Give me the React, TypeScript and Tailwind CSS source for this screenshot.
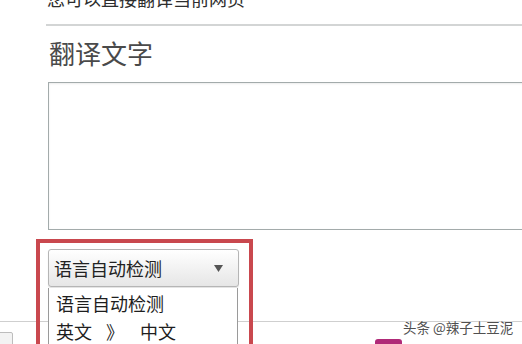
import React from "react";

const FONT = '"Noto Sans CJK SC", "Noto Sans", sans-serif';

export default function App() {
  return (
    <div
      className="relative w-[522px] h-[344px] overflow-hidden bg-white"
      style={{ fontFamily: FONT }}
    >
      {/* top cut-off hint text */}
      <div className="ml-[47px] mt-[-12px] text-[18px] leading-[20px] text-[#2e2e2e] whitespace-nowrap">
        您可以直接翻译当前网页
      </div>
      {/* separator */}
      <div className="ml-[46px] mt-[16px] h-[2px] bg-[#d3d5d5]" />
      {/* title */}
      <div className="ml-[49px] mt-[10px] text-[26px] leading-[34px] text-[#4a4a4a] whitespace-nowrap">
        翻译文字
      </div>
      {/* textarea */}
      <div className="ml-[48px] mt-[12px] w-[490px] h-[148px] border border-[#a3abab] bg-white shadow-[inset_0_1px_2px_rgba(0,0,0,0.08)]" />
      {/* select */}
      <div className="ml-[48px] mt-[19px] w-[191px] h-[38px] rounded-[3px] border border-[#b5b5b5] bg-gradient-to-b from-white to-[#e6e6e6] shadow-[0_1px_1px_rgba(0,0,0,0.12)] flex items-center justify-between pl-[5px] pr-[15px]">
        <span className="text-[18px] leading-[24px] text-[#222] whitespace-nowrap">语言自动检测</span>
        <svg width="9" height="7" viewBox="0 0 9 7">
          <path d="M0 0 L9 0 L4.5 7 Z" fill="#555" />
        </svg>
      </div>
      {/* page line */}
      <div className="mt-[34px] h-[1px] w-full bg-[#cfcfcf]" />
      {/* bottom row */}
      <div className="mt-[10px] flex items-start">
        <div className="ml-[-5px] w-[18px] h-[14px] rounded-[2px] border border-[#bdbdbd] bg-[#f3f3f3] shrink-0" />
        <div className="ml-[362px] mt-[7px] w-[27px] h-[10px] rounded-t-[3px] bg-[#b02a78] shrink-0" />
      </div>

      {/* dropdown list overlay */}
      <div className="absolute left-[48px] top-[288px] w-[190px] h-[70px] border border-[#9a9a9a] border-t-0 bg-white">
        <div className="pl-[7px] pt-[1px] text-[18px] leading-[28px] text-[#1e1e1e] whitespace-nowrap">
          语言自动检测
        </div>
        <div className="pl-[7px] text-[18px] leading-[28px] text-[#1e1e1e] whitespace-nowrap flex">
          <span>英文</span>
          <span className="ml-[14px]">》</span>
          <span className="ml-[16px]">中文</span>
        </div>
      </div>

      {/* red annotation box */}
      <div className="absolute left-[36px] top-[239px] w-[217px] h-[120px] border-4 border-[#c9484e]" />

      {/* watermark */}
      <div
        className="absolute left-[403px] top-[317px] text-[13.5px] leading-[20px] text-[#505050] whitespace-nowrap"
        style={{ textShadow: "0 0 2px #fff, 0 0 2px #fff" }}
      >
        头条 @辣子土豆泥
      </div>
    </div>
  );
}
